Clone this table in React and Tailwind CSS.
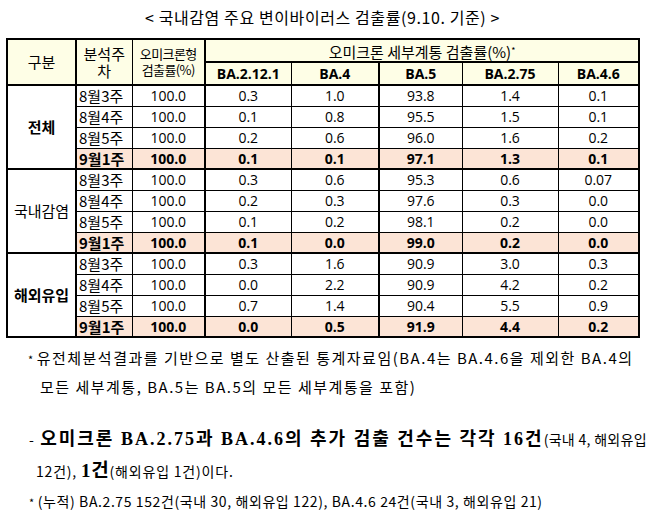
const groups = [
  {
    name: "전체",
    bold: true,
    rows: [
      ["8월3주", "100.0", "0.3", "1.0", "93.8", "1.4", "0.1"],
      ["8월4주", "100.0", "0.1", "0.8", "95.5", "1.5", "0.1"],
      ["8월5주", "100.0", "0.2", "0.6", "96.0", "1.6", "0.2"],
      ["9월1주", "100.0", "0.1", "0.1", "97.1", "1.3", "0.1"],
    ],
  },
  {
    name: "국내감염",
    bold: false,
    rows: [
      ["8월3주", "100.0", "0.3", "0.6", "95.3", "0.6", "0.07"],
      ["8월4주", "100.0", "0.2", "0.3", "97.6", "0.3", "0.0"],
      ["8월5주", "100.0", "0.1", "0.2", "98.1", "0.2", "0.0"],
      ["9월1주", "100.0", "0.1", "0.0", "99.0", "0.2", "0.0"],
    ],
  },
  {
    name: "해외유입",
    bold: true,
    rows: [
      ["8월3주", "100.0", "0.3", "1.6", "90.9", "3.0", "0.3"],
      ["8월4주", "100.0", "0.0", "2.2", "90.9", "4.2", "0.2"],
      ["8월5주", "100.0", "0.7", "1.4", "90.4", "5.5", "0.9"],
      ["9월1주", "100.0", "0.0", "0.5", "91.9", "4.4", "0.2"],
    ],
  },
];

// columns that get a thick left border
const thickLeft = [0, 0, 1, 0, 1, 0, 0];

const App = () => {
  return (
    <div className="w-[663px] h-[523px] bg-white text-black overflow-hidden font-['Noto_Sans_CJK_KR',sans-serif]">
      {/* Title */}
      <div className="w-[645px] pt-[6px] h-[38px] text-center text-[16px] leading-[22px] tracking-[0.6px]">
        &lt; 국내감염 주요 변이바이러스 검출률(9.10. 기준) &gt;
      </div>

      {/* Table */}
      <table className="ml-[6px] table-fixed border-collapse border-2 border-black font-['Open_Sans','Noto_Sans_CJK_KR',sans-serif] text-[14px]">
        <colgroup>
          <col className="w-[69px]" />
          <col className="w-[56px]" />
          <col className="w-[73px]" />
          <col className="w-[86px]" />
          <col className="w-[88px]" />
          <col className="w-[83px]" />
          <col className="w-[96px]" />
          <col className="w-[81px]" />
        </colgroup>
        <thead className="bg-[#fefee6]">
          <tr className="h-[23px]">
            <th rowSpan={2} className="border-2 border-black font-normal text-[15px] font-['Noto_Sans_CJK_KR',sans-serif]">
              구분
            </th>
            <th rowSpan={2} className="border border-black border-b-2 font-normal text-[15px] leading-[17px] p-0 font-['Noto_Sans_CJK_KR',sans-serif]">
              분석주
              <br />차
            </th>
            <th rowSpan={2} className="border border-black border-b-2 border-r-2 font-normal text-[13px] leading-[16px] tracking-[-0.6px] p-0 font-['Noto_Sans_CJK_KR',sans-serif]">
              오미크론형
              <br />검출률(%)
            </th>
            <th colSpan={5} className="border-2 border-black font-normal text-[15px] leading-[18px] align-bottom font-['Noto_Sans_CJK_KR',sans-serif]">
              오미크론 세부계통 검출률(%)<sup className="text-[9px]">*</sup>
            </th>
          </tr>
          <tr className="h-[23px]">
            {["BA.2.12.1", "BA.4", "BA.5", "BA.2.75", "BA.4.6"].map((h, i) => (
              <th
                key={h}
                className={`border border-black border-b-2 font-bold text-[14px] ${i === 2 ? "border-l-2" : ""}`}
              >
                {h}
              </th>
            ))}
          </tr>
        </thead>
        <tbody>
          {groups.map((g) =>
            g.rows.map((r, ri) => {
              const hl = ri === 3;
              return (
                <tr key={g.name + ri} className={`h-[21px] ${ri === 0 ? "border-t-2 border-black" : ""}`}>
                  {ri === 0 && (
                    <td
                      rowSpan={4}
                      className={`border-2 border-black text-center text-[15px] font-['Noto_Sans_CJK_KR',sans-serif] ${g.bold ? "font-bold" : ""}`}
                    >
                      {g.name}
                    </td>
                  )}
                  {r.map((c, ci) => (
                    <td
                      key={ci}
                      className={`border border-black text-center leading-[19px] p-0 ${thickLeft[ci] ? "border-l-2" : ""} ${ri === 0 ? "border-t-2" : ""} ${
                        hl ? "bg-[#fce4d6] font-bold" : ""
                      } ${ci === 0 ? "text-left pl-[2px] text-[15px] font-['Noto_Sans_CJK_KR',sans-serif]" : ""}`}
                    >
                      {c}
                    </td>
                  ))}
                </tr>
              );
            })
          )}
        </tbody>
      </table>

      {/* Notes */}
      <div className="pl-[28px] pt-[6px] text-[15px] leading-[28px] tracking-[1.5px]">
        <div>
          <span className="text-[11px] mr-[2px]">*</span>유전체분석결과를 기반으로 별도 산출된 통계자료임(BA.4는 BA.4.6을 제외한 BA.4의
        </div>
        <div className="pl-[12px]">모든 세부계통, BA.5는 BA.5의 모든 세부계통을 포함)</div>
      </div>

      <div className="pl-[29px] pt-[22px]">
        <div className="leading-[32px] text-[14px] whitespace-nowrap tracking-[0.3px]">
          <span className="mr-[6px]">-</span>
          <span className="font-bold text-[18px] tracking-[2px] font-['Liberation_Serif','Noto_Sans_CJK_KR',serif]">오미크론 BA.2.75과 BA.4.6의 추가 검출 건수는 각각 16건</span>(국내 4, 해외유입
        </div>
        <div className="pl-[7px] leading-[32px] text-[14px] tracking-[0.8px]">
          12건), <span className="font-bold text-[19px] font-['Liberation_Serif','Noto_Sans_CJK_KR',serif]">1건</span>(해외유입 1건)이다.
        </div>
        <div className="leading-[28px] text-[14px] tracking-[0.6px]">
          <span className="text-[11px] mr-[3px]">*</span>(누적) BA.2.75 152건(국내 30, 해외유입 122), BA.4.6 24건(국내 3, 해외유입 21)
        </div>
      </div>
    </div>
  );
};

export default App;
